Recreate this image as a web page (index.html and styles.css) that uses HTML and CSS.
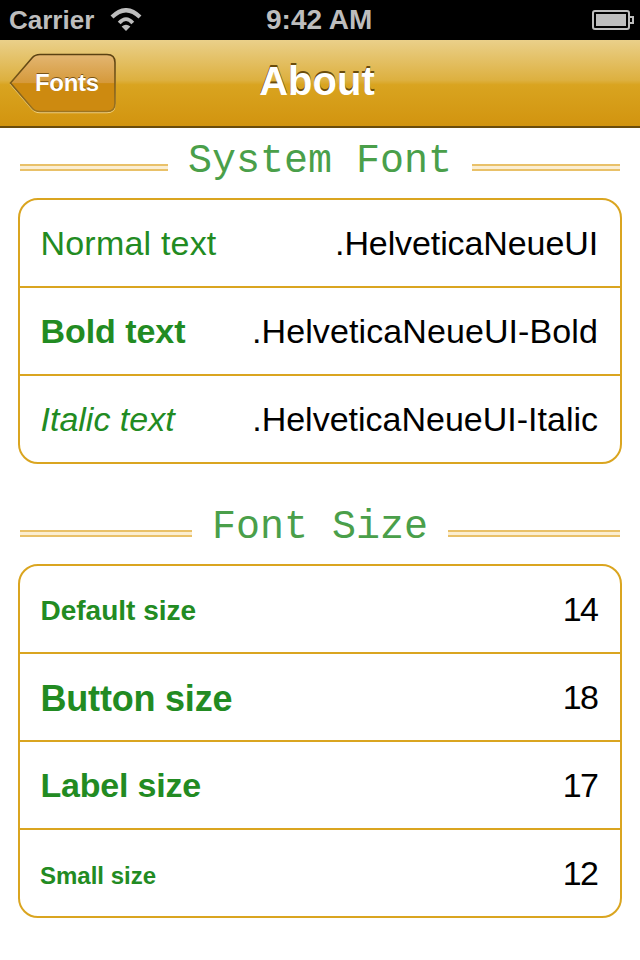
FILE: index.html
```html
<!DOCTYPE html>
<html lang="en">
<head>
    <meta charset="UTF-8">
    <meta name="viewport" content="width=device-width, initial-scale=1.0">
    <title>About</title>
    <link rel="stylesheet" href="styles.css">
</head>
<body>
    <div class="status-bar">
        <div class="status-left">
            <span class="carrier">Carrier</span>
            <svg class="wifi" width="32" height="23" viewBox="0 0 32 23">
                <path d="M16 23 L11.6 18.4 Q16 15.2 20.4 18.4 Z" fill="#bdbdbd"/>
                <path d="M9.2 15 Q16 7.2 22.8 15" fill="none" stroke="#bdbdbd" stroke-width="3.8"/>
                <path d="M2 9 Q16 -4.6 30 9" fill="none" stroke="#bdbdbd" stroke-width="4.2"/>
            </svg>
        </div>
        <span class="status-time">9:42 AM</span>
        <div class="battery">
            <div class="battery-body"><div class="battery-fill"></div></div>
            <div class="battery-tip"></div>
        </div>
    </div>

    <div class="nav-bar">
        <div class="back-btn">
            <svg class="back-shape" width="110" height="62" viewBox="0 0 110 62">
                <defs>
                    <linearGradient id="backFill" x1="0" y1="0" x2="0" y2="1">
                        <stop offset="0" stop-color="#e3b672"/>
                        <stop offset="0.5" stop-color="#d5993a"/>
                        <stop offset="0.51" stop-color="#cd8a10"/>
                        <stop offset="1" stop-color="#cd8a10"/>
                    </linearGradient>
                    <linearGradient id="backLine" x1="0" y1="0" x2="0" y2="1">
                        <stop offset="0" stop-color="#5a4112"/>
                        <stop offset="1" stop-color="#9c7420"/>
                    </linearGradient>
                </defs>
                <path d="M1.5 30 L23 5 Q26 1.5 31 1.5 L98 1.5 Q106 1.5 106 9.5 L106 50.5 Q106 58.5 98 58.5 L31 58.5 Q26 58.5 23 55 Z" fill="none" stroke="#efcf7c" stroke-width="1.2" transform="translate(0 1.2)"/>
                <path d="M1.5 30 L23 5 Q26 1.5 31 1.5 L98 1.5 Q106 1.5 106 9.5 L106 50.5 Q106 58.5 98 58.5 L31 58.5 Q26 58.5 23 55 Z" fill="url(#backFill)" stroke="url(#backLine)" stroke-width="1.6"/>
            </svg>
            <span class="back-label">Fonts</span>
        </div>
        <h1 class="nav-title">About</h1>
    </div>

    <div class="content">
        <div class="section-head">
            <div class="rule"></div>
            <h2>System Font</h2>
            <div class="rule"></div>
        </div>
        <div class="table">
            <div class="row">
                <span class="name normal">Normal text</span>
                <span class="value tight">.HelveticaNeueUI</span>
            </div>
            <div class="row">
                <span class="name bold">Bold text</span>
                <span class="value wide">.HelveticaNeueUI-Bold</span>
            </div>
            <div class="row">
                <span class="name italic">Italic text</span>
                <span class="value">.HelveticaNeueUI-Italic</span>
            </div>
        </div>

        <div class="section-head second">
            <div class="rule"></div>
            <h2>Font Size</h2>
            <div class="rule"></div>
        </div>
        <div class="table">
            <div class="row">
                <span class="name size-default">Default size</span>
                <span class="value num">14</span>
            </div>
            <div class="row">
                <span class="name size-button">Button size</span>
                <span class="value num">18</span>
            </div>
            <div class="row">
                <span class="name size-label">Label size</span>
                <span class="value num">17</span>
            </div>
            <div class="row">
                <span class="name size-small">Small size</span>
                <span class="value num">12</span>
            </div>
        </div>
    </div>
</body>
</html>
```

FILE: styles.css
```css
* {
    box-sizing: border-box;
}
body {
    margin: 0;
    background: #fff;
    font-family: "Liberation Sans", Arial, sans-serif;
}
.status-bar {
    height: 40px;
    background: #000;
    color: #bdbdbd;
    display: flex;
    align-items: center;
    padding: 0 6px 0 9px;
    font-size: 28px;
    font-weight: bold;
}
.status-left {
    width: 257px;
    display: flex;
    align-items: center;
    gap: 16px;
}
.carrier {
    font-size: 26px;
}
.wifi {
    margin-top: -1px;
}
.battery {
    margin-left: auto;
    display: flex;
    align-items: center;
}
.battery-body {
    width: 38px;
    height: 20px;
    border: 2px solid #bdbdbd;
    border-radius: 3px;
    padding: 2px;
}
.battery-fill {
    height: 100%;
    background: #bdbdbd;
}
.battery-tip {
    width: 4px;
    height: 8px;
    border: 2px solid #bdbdbd;
    border-left: none;
}
.nav-bar {
    height: 88px;
    background: linear-gradient(#ead08a 0, #ddb03f 47%, #d9a420 52%, #d2940f 100%);
    border-bottom: 2px solid #6a4c0c;
    position: relative;
    display: flex;
    justify-content: center;
    align-items: center;
}
.back-btn {
    position: absolute;
    left: 9px;
    top: 13px;
    width: 110px;
    height: 60px;
    display: flex;
    align-items: center;
}
.back-shape {
    position: absolute;
    left: 0;
    top: 0;
}
.back-label {
    position: relative;
    margin-left: 26px;
    color: #fff;
    font-size: 24px;
    font-weight: bold;
    letter-spacing: -0.3px;
    text-shadow: 0 -1px 0 rgba(80, 50, 0, 0.7);
}
.nav-title {
    margin: 0 6px 4px 0;
    color: #fff;
    font-size: 40px;
    font-weight: bold;
    text-shadow: 0 -2px 0 #6a4c0c;
}
.content {
    padding: 0 18px;
}
.section-head {
    height: 70px;
    display: flex;
    align-items: center;
    gap: 20px;
    padding: 0 2px 6px;
}
.section-head.second {
    margin-top: 30px;
}
.section-head h2 {
    margin: 2px 0 0;
    font-family: "Liberation Mono", "Courier New", monospace;
    font-size: 40px;
    font-weight: normal;
    color: #4a9f4a;
    white-space: nowrap;
}
.rule {
    flex: 1;
    height: 7px;
    margin-top: 15px;
    background: #fbeed2;
    border-top: 2px solid #e9c169;
    border-bottom: 2px solid #e9c169;
}
.table {
    border: 2px solid #daa520;
    border-radius: 20px;
}
.row {
    height: 88px;
    display: flex;
    align-items: center;
    justify-content: space-between;
    padding: 0 22px 0 20.5px;
    border-top: 2px solid #daa520;
}
.row:first-child {
    border-top: none;
    height: 86px;
    padding-top: 1px;
}
.name {
    color: #228b22;
}
.value {
    color: #000;
    font-size: 34px;
}
.tight {
    letter-spacing: -0.1px;
}
.wide {
    letter-spacing: 0.1px;
}
.num {
    letter-spacing: -1.5px;
    margin-right: 0.5px;
}
.normal {
    font-size: 34px;
    letter-spacing: 0.2px;
}
.bold {
    font-size: 34px;
    font-weight: bold;
    letter-spacing: -0.05px;
}
.italic {
    font-size: 34px;
    font-style: italic;
}
.size-default {
    font-size: 28px;
    font-weight: bold;
    margin-top: 2px;
}
.size-button {
    font-size: 36px;
    font-weight: bold;
    letter-spacing: -0.2px;
    margin-top: 4px;
}
.size-label {
    font-size: 34px;
    font-weight: bold;
    letter-spacing: -0.2px;
}
.size-small {
    font-size: 24px;
    font-weight: bold;
    margin-top: 6px;
    margin-left: -0.5px;
}
```
